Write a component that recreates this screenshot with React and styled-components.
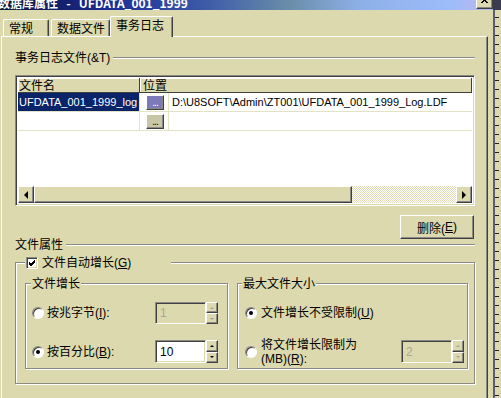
import React from 'react';
import styled, { createGlobalStyle, css } from 'styled-components';

const KHAKI = '#dcd9ae';
const SHADOW = '#8c8a84';
const DARK = '#404040';
const WHITE = '#ffffff';
const GRIDLINE = '#e4e2c4';

const Global = createGlobalStyle`
  html, body { margin: 0; padding: 0; background: ${KHAKI}; overflow: hidden; }
  body {
    font-family: "Liberation Sans", "Noto Sans CJK SC", sans-serif;
    font-size: 12px;
    color: #000;
  }
  * { box-sizing: border-box; }
`;

const raised = css`
  background: ${KHAKI};
  border: 1px solid;
  border-color: ${WHITE} ${DARK} ${DARK} ${WHITE};
  box-shadow: inset -1px -1px 0 ${SHADOW};
`;

const sunken = css`
  border: 1px solid;
  border-color: ${SHADOW} ${WHITE} ${WHITE} ${SHADOW};
  box-shadow: inset 1px 1px 0 ${DARK}, inset -1px -1px 0 ${KHAKI};
`;

const etched = css`
  border: 1px solid ${SHADOW};
  box-shadow: inset 1px 1px 0 ${WHITE}, 1px 1px 0 ${WHITE};
`;

const Window = styled.div`
  width: 501px;
  height: 398px;
  display: flex;
  flex-direction: column;
  overflow: hidden;
`;

const TitleBar = styled.div`
  height: 10px;
  flex: none;
  display: flex;
  align-items: flex-end;
  overflow: hidden;
  background: linear-gradient(90deg, #0b1838 0%, #14206a 12%, #1c2c98 22%, #3a58a8 40%, #6a8eaa 58%, #8eb0e8 72%, #9cbcfa 90%, #b0b8f0 95%);
`;

const TitleText = styled.div`
  flex: none;
  color: ${WHITE};
  font-family: "Noto Sans CJK SC", sans-serif;
  font-weight: bold;
  font-size: 12px;
  line-height: 16px;
  margin-bottom: -1px;
  margin-left: -2px;
  white-space: pre;
`;

const CloseBtn = styled.div`
  ${raised};
  margin-left: auto;
  align-self: flex-start;
  width: 17px;
  height: 9px;
  border-top: none;
  display: flex;
  justify-content: center;
  align-items: flex-start;
  overflow: hidden;
`;

const TitleTail = styled.div`
  width: 8px;
  height: 100%;
  background: #3c3c50;
`;

const Body = styled.div`
  flex: 1;
  display: flex;
  min-height: 0;
`;

const Main = styled.div`
  width: 488px;
  flex: none;
  display: flex;
  flex-direction: column;
  padding-left: 1px;
`;

const TabRow = styled.div`
  height: 26px;
  flex: none;
  display: flex;
  align-items: flex-end;
  padding-left: 2px;
  position: relative;
  z-index: 1;
`;

const Tab = styled.div`
  flex: none;
  width: ${p => p.$w}px;
  margin-left: ${p => p.$ml || 0}px;
  height: ${p => (p.$active ? 21 : 17)}px;
  margin-bottom: ${p => (p.$active ? -1 : 0)}px;
  background: ${KHAKI};
  border-top: 1px solid ${WHITE};
  border-left: 1px solid ${WHITE};
  border-right: 1px solid ${DARK};
  box-shadow: inset -1px 0 0 ${SHADOW};
  border-radius: 2px 2px 0 0;
  padding-left: 5px;
  font-family: "Noto Sans CJK SC", sans-serif;
  font-size: 12px;
  line-height: ${p => (p.$active ? 16 : 15)}px;
`;

const Panel = styled.div`
  flex: 1;
  border-top: 1px solid ${WHITE};
  border-left: 1px solid ${WHITE};
  border-right: 1px solid ${DARK};
  box-shadow: inset -1px 0 0 ${SHADOW};
  padding: 14px 12px 0 13px;
  display: flex;
  flex-direction: column;
`;

const SectionHeader = styled.div`
  display: flex;
  align-items: center;
  gap: 3px;
  height: ${p => p.$h || 14}px;
  margin-top: ${p => p.$mt || 0}px;
  flex: none;
`;

const Label = styled.span`
  white-space: nowrap;
  line-height: 14px;
`;

const HeaderLine = styled.div`
  flex: 1;
  height: 2px;
  border-top: 1px solid ${SHADOW};
  border-bottom: 1px solid ${WHITE};
`;

const Grid = styled.div`
  ${sunken};
  margin-top: 10px;
  height: 131px;
  flex: none;
  background: ${WHITE};
  display: flex;
  flex-direction: column;
  padding: 2px;
`;

const GridHeader = styled.div`
  display: flex;
  height: 15px;
  flex: none;
`;

const HeadCell = styled.div`
  background: ${KHAKI};
  width: ${p => (p.$w ? `${p.$w}px` : 'auto')};
  flex: ${p => (p.$w ? 'none' : '1')};
  border-right: 1px solid ${DARK};
  border-bottom: 1px solid ${DARK};
  box-shadow: inset 1px 1px 0 ${WHITE};
  padding-left: ${p => p.$pl}px;
  line-height: 14px;
  font-family: "Noto Sans CJK SC", sans-serif;
`;

const GridRow = styled.div`
  display: flex;
  height: 19px;
  flex: none;
  border-bottom: 1px solid ${GRIDLINE};
`;

const NameCell = styled.div`
  width: 122px;
  flex: none;
  border-right: 1px solid ${GRIDLINE};
  background: ${p => (p.$selected ? '#0a246a' : WHITE)};
  color: ${p => (p.$selected ? WHITE : '#000')};
  font-size: 11px;
  line-height: 18px;
  padding-left: 1px;
  white-space: nowrap;
  overflow: hidden;
`;

const BtnCell = styled.div`
  width: 29px;
  flex: none;
  border-right: 1px solid ${GRIDLINE};
  display: flex;
  align-items: center;
  justify-content: center;
  padding-left: 2px;
`;

const EllipsisBtn = styled.div`
  width: 18px;
  height: 15px;
  border: 1px solid;
  border-color: ${WHITE} ${DARK} ${DARK} ${WHITE};
  box-shadow: inset -1px -1px 0 ${SHADOW};
  background: ${p => (p.$selected ? '#7c7ab8' : '#c8c6a6')};
  color: ${p => (p.$selected ? WHITE : '#000')};
  font-size: 10px;
  line-height: 14px;
  text-align: center;
  letter-spacing: -1px;
`;

const PathCell = styled.div`
  flex: 1;
  font-size: 11px;
  line-height: 18px;
  padding-left: 3px;
  white-space: nowrap;
  overflow: hidden;
`;

const ScrollBar = styled.div`
  margin-top: auto;
  height: 17px;
  flex: none;
  display: flex;
`;

const ScrollArrow = styled.div`
  ${raised};
  width: 16px;
  flex: none;
  display: flex;
  align-items: center;
  justify-content: center;
  &::after {
    content: '';
    border-top: 4px solid transparent;
    border-bottom: 4px solid transparent;
    ${p => (p.$dir === 'left'
      ? `border-right: 4px solid #000;`
      : `border-left: 4px solid #000;`)}
  }
`;

const Thumb = styled.div`
  ${raised};
  width: 318px;
  flex: none;
`;

const Track = styled.div`
  flex: 1;
  background-color: ${KHAKI};
  background-image: repeating-conic-gradient(${WHITE} 0 25%, transparent 0 50%);
  background-size: 2px 2px;
  opacity: 0.9;
`;

const ButtonRow = styled.div`
  display: flex;
  justify-content: flex-end;
  margin-top: 9px;
  padding-right: 1px;
  flex: none;
`;

const PushButton = styled.div`
  ${raised};
  width: 74px;
  height: 24px;
  display: flex;
  align-items: center;
  justify-content: center;
  font-size: 12px;
`;

const GroupBox = styled.div`
  ${etched};
  flex: none;
  width: ${p => (p.$w ? `${p.$w}px` : 'auto')};
  height: ${p => p.$h}px;
  margin-top: ${p => p.$mt || 0}px;
  padding: ${p => p.$pad || '0'};
  display: flex;
  flex-direction: column;
`;

const Legend = styled.div`
  display: flex;
  align-items: center;
  gap: 4px;
  height: 14px;
  margin-top: -7px;
  margin-left: ${p => p.$ml || 0}px;
  width: ${p => (p.$w ? `${p.$w}px` : 'fit-content')};
  padding: 0 1px;
  background: ${KHAKI};
  line-height: 14px;
  white-space: nowrap;
  flex: none;
`;

const CheckBox = styled.div`
  ${sunken};
  width: 12px;
  height: 12px;
  flex: none;
  background: ${WHITE};
  display: flex;
  align-items: center;
  justify-content: center;
`;

const InnerRow = styled.div`
  display: flex;
  gap: 9px;
  margin-top: 13px;
`;

const OptionRow = styled.div`
  display: flex;
  align-items: center;
  height: ${p => p.$h}px;
  margin-top: ${p => p.$mt}px;
  padding-left: ${p => p.$pl}px;
  padding-right: ${p => p.$pr}px;
  flex: none;
`;

const Radio = styled.div`
  width: 12px;
  height: 12px;
  flex: none;
  border-radius: 50%;
  border: 1px solid;
  border-color: ${SHADOW} ${WHITE} ${WHITE} ${SHADOW};
  box-shadow: inset 1px 1px 0 ${DARK};
  background: ${WHITE};
  display: flex;
  align-items: center;
  justify-content: center;
  &::after {
    content: '';
    width: 4px;
    height: 4px;
    border-radius: 50%;
    background: ${p => (p.$checked ? '#000' : 'transparent')};
  }
`;

const OptionLabel = styled.div`
  flex: 1;
  margin-left: ${p => p.$gap}px;
  line-height: 14px;
  white-space: nowrap;
`;

const SpinInput = styled.div`
  width: 63px;
  height: ${p => p.$h}px;
  flex: none;
  display: flex;
`;

const InputBox = styled.div`
  ${sunken};
  flex: 1;
  background: ${p => (p.$disabled ? KHAKI : WHITE)};
  color: ${p => (p.$disabled ? '#a8a694' : '#000')};
  font-size: 12px;
  padding-left: 4px;
  display: flex;
  align-items: center;
`;

const Spinner = styled.div`
  width: 12px;
  flex: none;
  display: flex;
  flex-direction: column;
`;

const SpinBtn = styled.div`
  ${raised};
  flex: 1;
  display: flex;
  align-items: center;
  justify-content: center;
  &::after {
    content: '';
    border-left: 2px solid transparent;
    border-right: 2px solid transparent;
    ${p => (p.$dir === 'up'
      ? `border-bottom: 2px solid ${p.$disabled ? '#a8a694' : '#000'};`
      : `border-top: 2px solid ${p.$disabled ? '#a8a694' : '#000'};`)}
  }
`;

const RightStrip = styled.div`
  flex: 1;
  display: flex;
  padding-left: 5px;
`;

const StripLine = styled.div`
  width: 2px;
  background: #5c5c74;
`;

const StripTicks = styled.div`
  flex: 1;
  background-image: repeating-linear-gradient(to bottom, transparent 0 7px, #202020 7px 8px, transparent 8px 9px);
  background-size: 4px 100%;
  background-repeat: no-repeat;
`;

const Check = () => (
  <svg width="8" height="8" viewBox="0 0 8 8">
    <path d="M1 3 L3 5 L7 1 M1 4 L3 6 L7 2 M1 5 L3 7 L7 3" stroke="#000" strokeWidth="1" fill="none" />
  </svg>
);

const CloseGlyph = () => (
  <svg width="9" height="8" viewBox="0 0 9 8">
    <path d="M1 -3 L7 3 M7 -3 L1 3 M2 -3 L8 3 M8 -3 L2 3" stroke="#000" strokeWidth="1" fill="none" />
  </svg>
);

const Spin = ({ disabled, value, h }) => (
  <SpinInput $h={h}>
    <InputBox $disabled={disabled}>{value}</InputBox>
    <Spinner>
      <SpinBtn $dir="up" $disabled={disabled} />
      <SpinBtn $dir="down" $disabled={disabled} />
    </Spinner>
  </SpinInput>
);

export default function App() {
  return (
    <>
      <Global />
      <Window>
        <TitleBar>
          <TitleText>数据库属性   -   UFDATA_001_1999</TitleText>
          <CloseBtn><CloseGlyph /></CloseBtn>
          <TitleTail />
        </TitleBar>
        <Body>
          <Main>
            <TabRow>
              <Tab $w={46}>常规</Tab>
              <Tab $w={59} $ml={2}>数据文件</Tab>
              <Tab $w={63} $active>事务日志</Tab>
            </TabRow>
            <Panel>
              <SectionHeader>
                <Label>事务日志文件(&amp;T)</Label>
                <HeaderLine />
              </SectionHeader>

              <Grid>
                <GridHeader>
                  <HeadCell $w={122} $pl={1}>文件名</HeadCell>
                  <HeadCell $pl={3}>位置</HeadCell>
                </GridHeader>
                <GridRow>
                  <NameCell $selected>UFDATA_001_1999_log</NameCell>
                  <BtnCell>
                    <EllipsisBtn $selected>...</EllipsisBtn>
                  </BtnCell>
                  <PathCell>D:\U8SOFT\Admin\ZT001\UFDATA_001_1999_Log.LDF</PathCell>
                </GridRow>
                <GridRow>
                  <NameCell />
                  <BtnCell>
                    <EllipsisBtn>...</EllipsisBtn>
                  </BtnCell>
                  <PathCell />
                </GridRow>
                <ScrollBar>
                  <ScrollArrow $dir="left" />
                  <Thumb />
                  <Track />
                  <ScrollArrow $dir="right" />
                </ScrollBar>
              </Grid>

              <ButtonRow>
                <PushButton>删除(<u>E</u>)</PushButton>
              </ButtonRow>

              <SectionHeader $h={12}>
                <Label>文件属性</Label>
                <HeaderLine />
              </SectionHeader>

              <GroupBox $h={122} $mt={11} $pad="0 4px 0 9px">
                <Legend $w={146}>
                  <CheckBox><Check /></CheckBox>
                  <span>文件自动增长(<u>G</u>)</span>
                </Legend>
                <InnerRow>
                  <GroupBox $w={203} $h={86}>
                    <Legend $ml={5}>文件增长</Legend>
                    <OptionRow $h={22} $mt={11} $pl={6} $pr={9}>
                      <Radio />
                      <OptionLabel $gap={3}>按兆字节(<u>I</u>):</OptionLabel>
                      <Spin disabled value="1" h={22} />
                    </OptionRow>
                    <OptionRow $h={23} $mt={16} $pl={6} $pr={9}>
                      <Radio $checked />
                      <OptionLabel $gap={3}>按百分比(<u>B</u>):</OptionLabel>
                      <Spin value="10" h={23} />
                    </OptionRow>
                  </GroupBox>
                  <GroupBox $w={231} $h={86}>
                    <Legend $ml={4}>最大文件大小</Legend>
                    <OptionRow $h={22} $mt={11} $pl={7} $pr={3}>
                      <Radio $checked />
                      <OptionLabel $gap={4}>文件增长不受限制(<u>U</u>)</OptionLabel>
                    </OptionRow>
                    <OptionRow $h={23} $mt={16} $pl={7} $pr={3}>
                      <Radio />
                      <OptionLabel $gap={4}>将文件增长限制为<br />(MB)(<u>R</u>):</OptionLabel>
                      <Spin disabled value="2" h={23} />
                    </OptionRow>
                  </GroupBox>
                </InnerRow>
              </GroupBox>
            </Panel>
          </Main>
          <RightStrip>
            <StripLine />
            <StripTicks />
          </RightStrip>
        </Body>
      </Window>
    </>
  );
}
